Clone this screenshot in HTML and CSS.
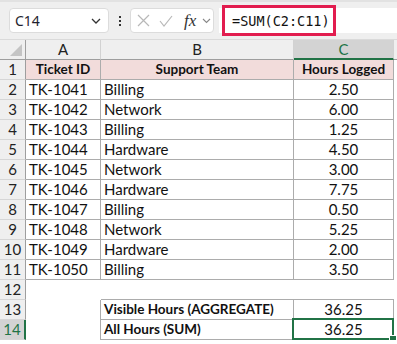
FILE: index.html
```html
<!DOCTYPE html>
<html>
<head>
  <meta charset="utf-8">
  <title>Sheet</title>
  <link rel="stylesheet" href="styles.css">
</head>
<body>
  <div class="toolbar">
    <div class="namebox">
      <span>C14</span>
      <svg class="chev" width="10" height="6" viewBox="0 0 10 6"><path d="M1 1l4 4 4-4" fill="none" stroke="#333" stroke-width="1.3"/></svg>
    </div>
    <div class="dots"><i></i><i></i><i></i></div>
    <div class="fxbox">
      <svg width="13" height="13" viewBox="0 0 13 13"><path d="M1 1l11 11M12 1L1 12" stroke="#b8b8b8" stroke-width="1.2"/></svg>
      <svg width="14" height="12" viewBox="0 0 14 12"><path d="M1 6l4 5 8-10" fill="none" stroke="#b8b8b8" stroke-width="1.2"/></svg>
      <span class="fx">fx</span>
      <svg width="9" height="6" viewBox="0 0 9 6"><path d="M1 1l3.5 3.5L8 1" fill="none" stroke="#888" stroke-width="1.1"/></svg>
    </div>
    <div class="formula">
      <span class="hl">=SUM(C2:C11)</span>
    </div>
  </div>

  <div class="sheet">
    <div class="corner"><span class="tri"></span></div>
    <div class="colh">A</div>
    <div class="colh">B</div>
    <div class="colh sel">C</div>
    <div class="colh end"></div>

    <div class="rowh">1</div>
    <div class="c hd">Ticket ID</div>
    <div class="c hd">Support Team</div>
    <div class="c hd">Hours Logged</div>
    <div class="pad"></div>

    <div class="rowh">2</div><div class="c">TK-1041</div><div class="c">Billing</div><div class="c num">2.50</div><div class="pad"></div>
    <div class="rowh">3</div><div class="c">TK-1042</div><div class="c">Network</div><div class="c num">6.00</div><div class="pad"></div>
    <div class="rowh">4</div><div class="c">TK-1043</div><div class="c">Billing</div><div class="c num">1.25</div><div class="pad"></div>
    <div class="rowh">5</div><div class="c">TK-1044</div><div class="c">Hardware</div><div class="c num">4.50</div><div class="pad"></div>
    <div class="rowh">6</div><div class="c">TK-1045</div><div class="c">Network</div><div class="c num">3.00</div><div class="pad"></div>
    <div class="rowh">7</div><div class="c">TK-1046</div><div class="c">Hardware</div><div class="c num">7.75</div><div class="pad"></div>
    <div class="rowh">8</div><div class="c">TK-1047</div><div class="c">Billing</div><div class="c num">0.50</div><div class="pad"></div>
    <div class="rowh">9</div><div class="c">TK-1048</div><div class="c">Network</div><div class="c num">5.25</div><div class="pad"></div>
    <div class="rowh">10</div><div class="c">TK-1049</div><div class="c">Hardware</div><div class="c num">2.00</div><div class="pad"></div>
    <div class="rowh">11</div><div class="c">TK-1050</div><div class="c">Billing</div><div class="c num">3.50</div><div class="pad"></div>

    <div class="rowh">12</div><div class="e"></div><div class="e under"></div><div class="e under"></div><div class="pad"></div>

    <div class="rowh">13</div><div class="e side"></div><div class="c bold">Visible Hours (AGGREGATE)</div><div class="c num">36.25</div><div class="pad"></div>
    <div class="rowh sel">14</div><div class="e side"></div><div class="c bold">All Hours (SUM)</div><div class="c num active">36.25</div><div class="pad"></div>
  </div>
</body>
</html>
```

FILE: styles.css
```css
* {
  box-sizing: border-box;
}

body {
  margin: 0;
  background: #fff;
  font-family: Lato, "Liberation Sans", sans-serif;
  overflow: hidden;
}

.toolbar {
  height: 40px;
  background: #efefef;
  border-top: 2px solid #e2e2e2;
  border-bottom: 1px solid #dadada;
  display: flex;
  align-items: center;
  padding-left: 9px;
}

.namebox {
  width: 100px;
  height: 25px;
  background: #fff;
  border: 1px solid #dcdcdc;
  border-radius: 4px;
  display: flex;
  align-items: center;
  justify-content: space-between;
  padding: 0 7px 0 5px;
  font-family: "Noto Sans", sans-serif;
  font-size: 14px;
  color: #1f1f2f;
}

.dots {
  width: 21px;
  display: flex;
  flex-direction: column;
  align-items: center;
  gap: 2px;
}

.dots i {
  width: 2px;
  height: 2px;
  background: #333;
}

.fxbox {
  width: 84px;
  height: 25px;
  background: #fff;
  border: 1px solid #dcdcdc;
  border-radius: 4px;
  display: flex;
  align-items: center;
  gap: 9px;
  padding-left: 6px;
}

.fx {
  font-family: "Liberation Serif", serif;
  font-style: italic;
  font-size: 17px;
  color: #333;
  margin-left: 2px;
  margin-right: -3px;
}

.formula {
  flex: 1;
  height: 25px;
  margin-left: 5px;
  background: #fff;
  display: flex;
  align-items: center;
}

.hl {
  margin-left: 3px;
  width: 114px;
  height: 31px;
  border: 3px solid #e21d4f;
  display: flex;
  align-items: center;
  padding-left: 7px;
  font-family: "DejaVu Sans Mono", monospace;
  font-size: 13.5px;
  color: #111;
}

.sheet {
  display: grid;
  grid-template-columns: 26px 75px 193px 100px 3px;
  grid-auto-rows: 20px;
  font-size: 15px;
  color: #000;
}

.corner,
.colh {
  background: #efefef;
  border-right: 1px solid #d2d2d2;
  border-bottom: 1px solid #9e9e9e;
  text-align: center;
  line-height: 19px;
  color: #222;
}

.corner {
  position: relative;
  border-right-color: #9e9e9e;
}

.tri {
  position: absolute;
  right: 3px;
  bottom: 3px;
  width: 0;
  height: 0;
  border-left: 12px solid transparent;
  border-bottom: 12px solid #c4c4c4;
}

.colh.sel {
  background: #d3d3d3;
  color: #217346;
  border-bottom: 2px solid #217346;
}

.colh.end {
  border-right: none;
}

.rowh {
  background: #efefef;
  border-right: 1px solid #9e9e9e;
  border-bottom: 1px solid #d6d6d6;
  text-align: center;
  line-height: 19px;
  color: #222;
}

.rowh.sel {
  background: #d3d3d3;
  color: #217346;
  border-right: 2px solid #217346;
}

.c {
  border-right: 1px solid #acacac;
  border-bottom: 1px solid #acacac;
  padding: 0 3px;
  line-height: 19px;
  white-space: nowrap;
  overflow: hidden;
  color: #111;
}

.c.hd {
  background: #f2dcdb;
  font-weight: bold;
  font-size: 13.5px;
  text-align: center;
}

.c.bold {
  font-weight: bold;
  font-size: 13.5px;
}

.c.num {
  text-align: center;
}

.e.under {
  border-bottom: 1px solid #acacac;
}

.e.side {
  border-right: 1px solid #acacac;
}

.active {
  position: relative;
  overflow: visible;
}

.active::before {
  content: "";
  position: absolute;
  left: -2px;
  top: -2px;
  right: -1px;
  bottom: -1px;
  border: 2px solid #217346;
}

.active::after {
  content: "";
  position: absolute;
  right: -4px;
  bottom: -4px;
  width: 6px;
  height: 6px;
  background: #217346;
  border: 1px solid #fff;
}
```
